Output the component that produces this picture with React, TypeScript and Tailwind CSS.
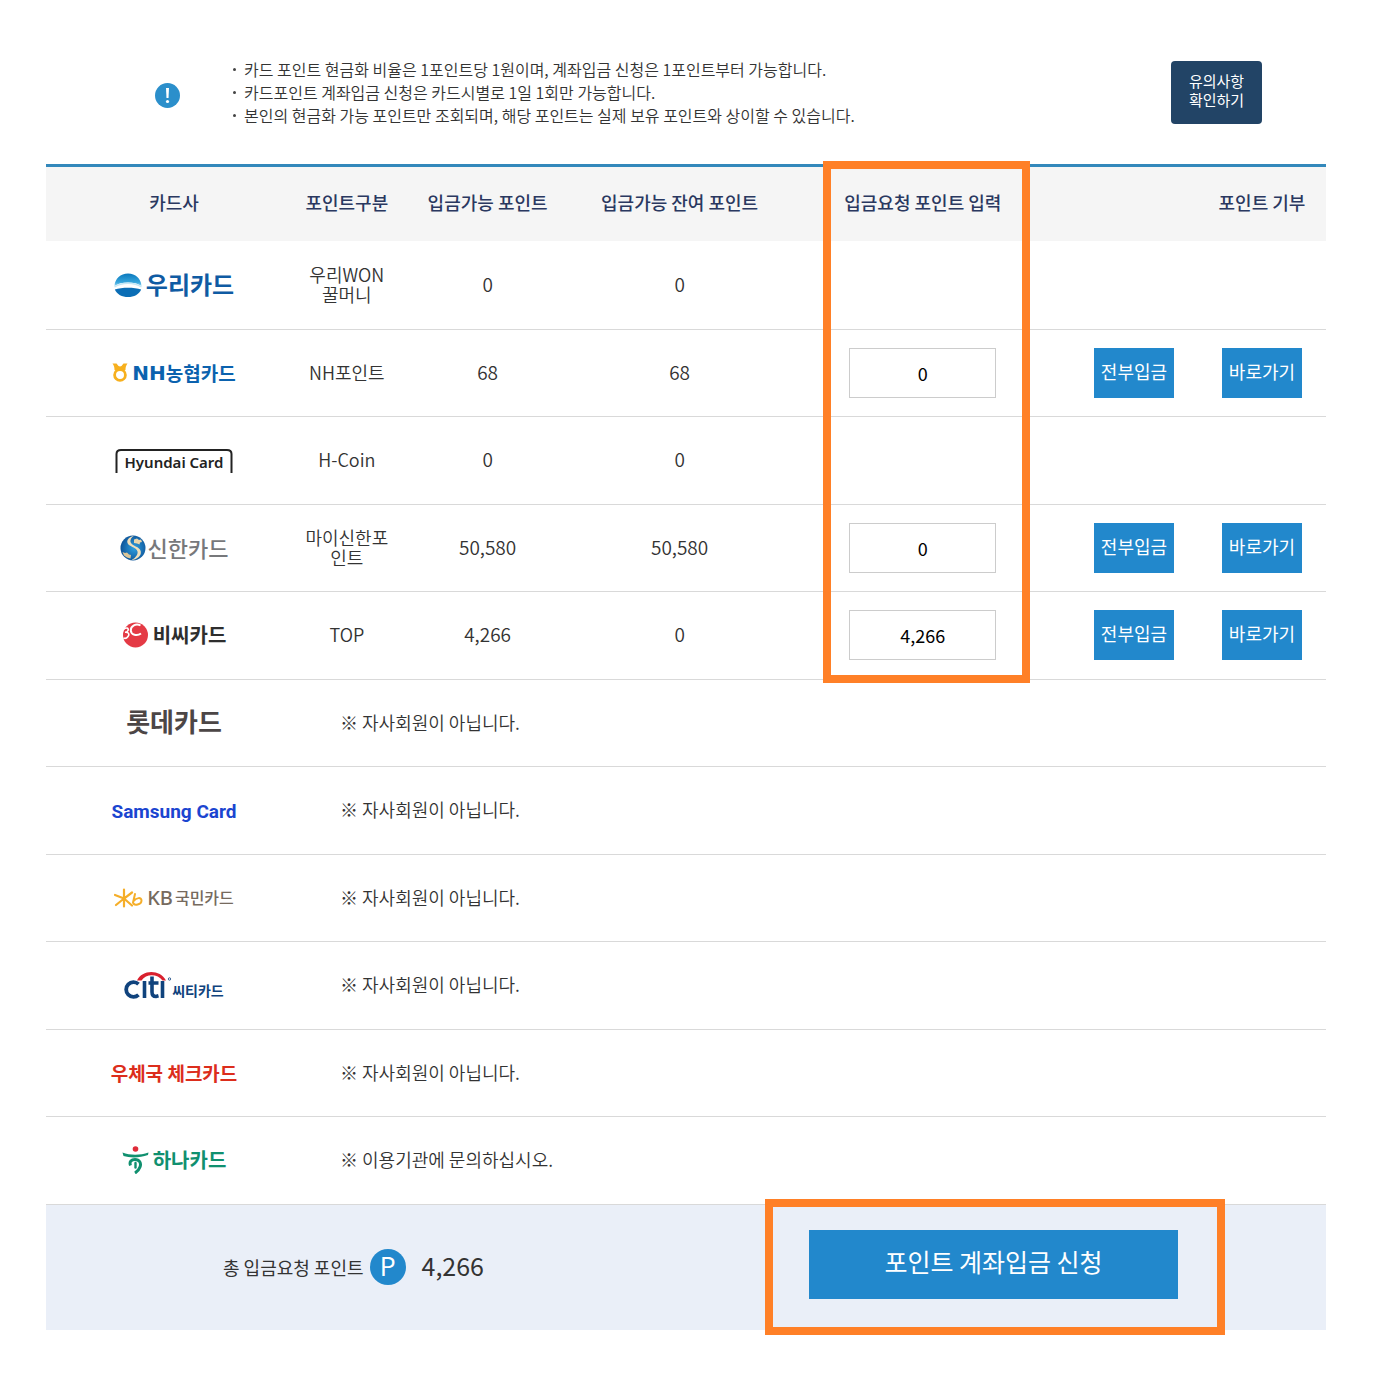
import { useState } from "react";
import type { ReactNode } from "react";

type CardRow = {
  id: string;
  logo: ReactNode;
  kind?: string;
  available?: string;
  remaining?: string;
  request?: string;
  message?: string;
};

function WooriLogo() {
  return (
    <div className="flex items-center justify-center gap-1 text-[#0f5ba3]">
      <svg width="28" height="24" viewBox="0 0 28 24" aria-hidden="true">
        <defs>
          <linearGradient id="woori" x1="0" y1="0" x2="0" y2="1">
            <stop offset="0" stopColor="#0a78bd" />
            <stop offset="0.7" stopColor="#35a5dc" />
            <stop offset="1" stopColor="#9ad6f0" />
          </linearGradient>
        </defs>
        <path d="M0.5 13C1 5.5 6.5 0.5 14 0.5S27 5.5 27.5 13C24 10.5 19.5 9.5 14 9.5S4 10.5 0.5 13Z" fill="url(#woori)" />
        <path d="M0.8 16.5C8 14 20 14 27.2 16.5C25 21.5 20 24 14 24S3 21.5 0.8 16.5Z" fill="#0a6db5" />
        <path d="M0.5 14C5 11 9 10.3 14 10.3S23 11 27.5 14" fill="none" stroke="#c6e8f6" strokeWidth="1.4" />
      </svg>
      <span className="pb-0.5 text-2xl leading-none font-bold">우리카드</span>
    </div>
  );
}

function NhLogo() {
  return (
    <div className="flex items-center justify-center text-[#0b62ae]">
      <svg className="mr-1" width="16" height="19" viewBox="0 0 16 19" aria-hidden="true">
        <circle cx="8" cy="12" r="5.4" fill="none" stroke="#f7b01e" strokeWidth="2.8" />
        <path d="M0.5 0.5H4.5L6.5 3L8 3.5L9.5 3L11.5 0.5H15.5C14 2.5 13.5 4 13.5 7L10.5 8H5.5L2.5 7C2.5 4 2 2.5 0.5 0.5Z" fill="#f7b01e" />
      </svg>
      <span className="font-['DejaVu_Sans',sans-serif] text-xl leading-none font-bold">NH</span>
      <span className="text-[19px] leading-none font-bold">농협카드</span>
    </div>
  );
}

function HyundaiLogo() {
  return (
    <svg className="mx-auto" width="118" height="26" viewBox="0 0 118 26" role="img" aria-label="Hyundai Card">
      <path d="M1.5 26V7Q1.5 3 6 3H112Q116.5 3 116.5 7V26" fill="none" stroke="#222" strokeWidth="2" />
      <text x="59" y="21" textAnchor="middle" fill="#222" className="font-['Noto_Sans',sans-serif] text-[15px] font-semibold">
        Hyundai Card
      </text>
    </svg>
  );
}

function ShinhanLogo() {
  return (
    <div className="flex items-center justify-center gap-0.5 text-[#77787b]">
      <svg width="26" height="26" viewBox="0 0 26 26" aria-hidden="true">
        <defs>
          <radialGradient id="shinhan" cx="0.55" cy="0.5" r="0.6">
            <stop offset="0" stopColor="#2fa0e0" />
            <stop offset="1" stopColor="#0b4d92" />
          </radialGradient>
        </defs>
        <circle cx="13" cy="13" r="12.5" fill="url(#shinhan)" />
        <path d="M14 0.8C9 2 6.5 5 7.5 8C8.5 11.5 16.5 12 17.5 16.5C18.2 20 15 23 11.5 25.2C17 24.5 21.5 21 20.8 16.5C20 11.5 11.5 11 10.5 7C10 4.5 11.5 2.5 14 0.8Z" fill="#f1dfbb" />
        <path d="M14 4.5L17 3.5L19 5L21 4.5L22 7L20 7.5L19.5 9.5L17 8.5L14 8Z" fill="#e8d5ae" />
        <path d="M2.5 17L5 18L7 17.5L9 19.5L11 20L10.5 23.5L7 22.5L4 20.5Z" fill="#dcc698" />
      </svg>
      <span className="pb-0.5 text-[22px] leading-none font-medium">신한카드</span>
    </div>
  );
}

function BcLogo() {
  return (
    <div className="flex items-center justify-center gap-1 text-[#2e2e2e]">
      <svg width="27" height="26" viewBox="0 0 27 26" aria-hidden="true">
        <circle cx="13.5" cy="13" r="12.5" fill="#e43a45" />
        <path d="M18.5 3.5C14 1 8.5 4 8.8 8.5C9 13 15 14.5 19 11.5" fill="none" stroke="#fff" strokeWidth="2" />
        <path d="M1.5 7.5C4.5 5 7 6 6 8.5C5.5 9.7 4 10.3 3 10.3C6.5 10 8 12 6 14.5C4.5 16.5 2.5 16.5 1.5 16" fill="none" stroke="#fff" strokeWidth="1.6" />
      </svg>
      <span className="text-xl leading-none font-bold">비씨카드</span>
    </div>
  );
}

function KbLogo() {
  return (
    <div className="flex items-center justify-center text-[#766a5e]">
      <svg className="mr-1" width="29" height="20" viewBox="0 0 29 20" aria-hidden="true">
        <path d="M10 1.5V18.5M1 7L10 10.5M18 4.5L10 10.5L2 17M10 10.5L18 17.5" fill="none" stroke="#f5ae29" strokeWidth="2.2" strokeLinecap="round" />
        <path d="M21 6L19 14.5C20 18.5 27.5 16.5 27.5 12.5C27.5 9 22.5 9.5 19.5 13" fill="none" stroke="#f5ae29" strokeWidth="2" strokeLinecap="round" />
      </svg>
      <span className="mr-0.5 font-['Noto_Sans',sans-serif] text-xl leading-none font-medium">KB</span>
      <span className="pb-0.5 text-base leading-none font-medium">국민카드</span>
    </div>
  );
}

function CitiLogo() {
  return (
    <div className="flex items-end justify-center text-[#10437d]">
      <svg width="48" height="28" viewBox="0 0 48 28" role="img" aria-label="citi">
        <path d="M13 9.5C18 -1.5 36 -2 42 9.5L38.5 9.5C33.5 2.5 22 2.5 17.5 9.5Z" fill="#d9202e" />
        <path d="M14.5 13.2A7.3 7.3 0 1 0 14.5 23.8" fill="none" stroke="#10437d" strokeWidth="3.8" />
        <path d="M20.5 10V27M38.5 10V27M28 5.5V21Q28 25.5 32 25.5L34.5 24.8M24.5 12H34.5" fill="none" stroke="#10437d" strokeWidth="3.6" />
        <circle cx="45.5" cy="8" r="1.2" fill="none" stroke="#10437d" strokeWidth="0.8" />
      </svg>
      <span className="pb-0.5 text-sm leading-none font-bold">씨티카드</span>
    </div>
  );
}

function HanaLogo() {
  return (
    <div className="flex items-center justify-center gap-1 text-[#10906f]">
      <svg width="27" height="28" viewBox="0 0 27 28" aria-hidden="true">
        <circle cx="13.5" cy="3" r="2.8" fill="#df2b39" />
        <path d="M0.5 6.5C8 9.5 18 9.5 26.5 6.5L26 9C18 12 8 12 1.5 10Z" fill="#10906f" />
        <path d="M8.5 19.5C7 15.5 9.5 13.5 13 13.5C17.5 13.5 19.5 17 18 21C17 23.8 15.5 25.5 13 27" fill="none" stroke="#10906f" strokeWidth="3" />
        <path d="M13.5 17V21.5" fill="none" stroke="#10906f" strokeWidth="2.4" strokeLinecap="round" />
      </svg>
      <span className="text-xl leading-none font-bold">하나카드</span>
    </div>
  );
}

const NOT_MEMBER = "※ 자사회원이 아닙니다.";

const rows: CardRow[] = [
  { id: "woori", logo: <WooriLogo />, kind: "우리WON 꿀머니", available: "0", remaining: "0" },
  { id: "nh", logo: <NhLogo />, kind: "NH포인트", available: "68", remaining: "68", request: "0" },
  { id: "hyundai", logo: <HyundaiLogo />, kind: "H-Coin", available: "0", remaining: "0" },
  { id: "shinhan", logo: <ShinhanLogo />, kind: "마이신한포인트", available: "50,580", remaining: "50,580", request: "0" },
  { id: "bc", logo: <BcLogo />, kind: "TOP", available: "4,266", remaining: "0", request: "4,266" },
  {
    id: "lotte",
    logo: <span className="text-[26px] leading-none font-bold text-[#4c4646]">롯데카드</span>,
    message: NOT_MEMBER,
  },
  {
    id: "samsung",
    logo: <span className="font-[Roboto,sans-serif] text-[19px] leading-none font-bold text-[#1b45d0]">Samsung Card</span>,
    message: NOT_MEMBER,
  },
  { id: "kb", logo: <KbLogo />, message: NOT_MEMBER },
  { id: "citi", logo: <CitiLogo />, message: NOT_MEMBER },
  {
    id: "post",
    logo: <span className="text-[19px] leading-none font-bold text-[#dc2d1c]">우체국 체크카드</span>,
    message: NOT_MEMBER,
  },
  { id: "hana", logo: <HanaLogo />, message: "※ 이용기관에 문의하십시오." },
];

const notices = [
  "카드 포인트 현금화 비율은 1포인트당 1원이며, 계좌입금 신청은 1포인트부터 가능합니다.",
  "카드포인트 계좌입금 신청은 카드시별로 1일 1회만 가능합니다.",
  "본인의 현금화 가능 포인트만 조회되며, 해당 포인트는 실제 보유 포인트와 상이할 수 있습니다.",
];

function Notice() {
  return (
    <section className="flex items-center pt-[58px] pr-16 pb-[37px] pl-[109px]">
      <svg className="mt-1.5 shrink-0" width="25" height="25" viewBox="0 0 25 25" aria-hidden="true">
        <circle cx="12.5" cy="12.5" r="12.5" fill="#2b8fcb" />
        <path d="M11 5H14L13.5 15H11.5Z" fill="#fff" />
        <circle cx="12.5" cy="18.5" r="1.6" fill="#fff" />
      </svg>
      <ul className="ml-[53px] grow text-base leading-[23px] font-[350] text-[#333]">
        {notices.map((notice) => (
          <li key={notice} className="flex items-center gap-2">
            <span className="size-[3px] shrink-0 rounded-full bg-[#444]" />
            {notice}
          </li>
        ))}
      </ul>
      <button type="button" className="h-[63px] w-[91px] shrink-0 rounded bg-[#224466] pb-1.5 text-[15px] leading-[19px] text-white">
        유의사항
        <br />
        확인하기
      </button>
    </section>
  );
}

function PointRow({ row, value, onChange }: { row: CardRow; value: string; onChange: (v: string) => void }) {
  return (
    <tr className="h-[87px] border-b border-[#d9d9d9] odd:h-[88px]">
      <td>{row.logo}</td>
      {row.message ? (
        <td colSpan={6} className="pb-0.5 pl-[38px] text-left">
          {row.message}
        </td>
      ) : (
        <>
          <td className="pb-0.5 leading-5 break-all">{row.kind}</td>
          <td className="pb-0.5 text-[19px]">{row.available}</td>
          <td className="pb-0.5 text-[19px]">{row.remaining}</td>
          <td>
            {row.request !== undefined && (
              <input
                type="text"
                aria-label="입금요청 포인트 입력"
                value={value}
                onChange={(e) => onChange(e.target.value)}
                className="h-[50px] w-[147px] border border-[#ccc] bg-white text-center align-middle font-normal text-black"
              />
            )}
          </td>
          <td>
            {row.request !== undefined && (
              <button type="button" className="h-[50px] w-20 bg-[#2288cc] pb-1 align-middle font-normal text-white">
                전부입금
              </button>
            )}
          </td>
          <td>
            {row.request !== undefined && (
              <a href="#donate" className="inline-block h-[50px] w-20 bg-[#2288cc] align-middle leading-[46px] font-normal text-white">
                바로가기
              </a>
            )}
          </td>
        </>
      )}
    </tr>
  );
}

export default function App() {
  const [requests, setRequests] = useState<Record<string, string>>({ nh: "0", shinhan: "0", bc: "4,266" });

  const total = Object.values(requests).reduce((sum, v) => sum + (Number(v.replace(/,/g, "")) || 0), 0);

  return (
    <main className="bg-white pr-[63px] pb-[45px] pl-[46px] font-['Noto_Sans_CJK_KR',sans-serif]">
      <Notice />
      <div className="border-t-[3px] border-[#3388bb]">
        <table className="w-full table-fixed border-collapse text-center text-lg font-[350] text-[#333]">
          <thead>
            <tr className="h-[74px] bg-[#f5f5f5] text-[#2a3860]">
              <th className="w-[20%] pb-1 font-medium">카드사</th>
              <th className="w-[7%] pb-1 font-medium whitespace-nowrap">포인트구분</th>
              <th className="w-[15%] pb-1 font-medium">입금가능 포인트</th>
              <th className="w-[15%] pb-1 font-medium">입금가능 잔여 포인트</th>
              <th className="relative w-[23%] pb-1 font-medium">
                입금요청 포인트 입력
                <span className="pointer-events-none absolute -top-1.5 left-[47px] h-[522px] w-[207px] border-8 border-[#ff8027]" />
              </th>
              <th className="w-[10%]" />
              <th className="w-[10%] pb-1 font-medium">포인트 기부</th>
            </tr>
          </thead>
          <tbody>
            {rows.map((row) => (
              <PointRow
                key={row.id}
                row={row}
                value={requests[row.id] ?? ""}
                onChange={(v) => setRequests({ ...requests, [row.id]: v })}
              />
            ))}
          </tbody>
        </table>
      </div>
      <footer className="flex h-[125px] items-center justify-between bg-[#eaeff8] pr-[148px] pl-[177px] text-[#333]">
        <div className="flex items-center">
          <span className="text-lg">총 입금요청 포인트</span>
          <span className="ml-1.5 flex size-9 items-center justify-center rounded-full bg-[#2288cc] pb-1 text-[25px] leading-none text-white">
            P
          </span>
          <span className="ml-4 pb-1 text-[25px] leading-none">{total.toLocaleString("en-US")}</span>
        </div>
        <div className="relative mb-1.5">
          <button type="button" className="block h-[69px] w-[369px] bg-[#2288cc] pb-1 text-[25px] text-white">
            포인트 계좌입금 신청
          </button>
          <span className="pointer-events-none absolute -top-[31px] -left-11 h-[136px] w-[460px] border-8 border-[#ff8027]" />
        </div>
      </footer>
    </main>
  );
}
